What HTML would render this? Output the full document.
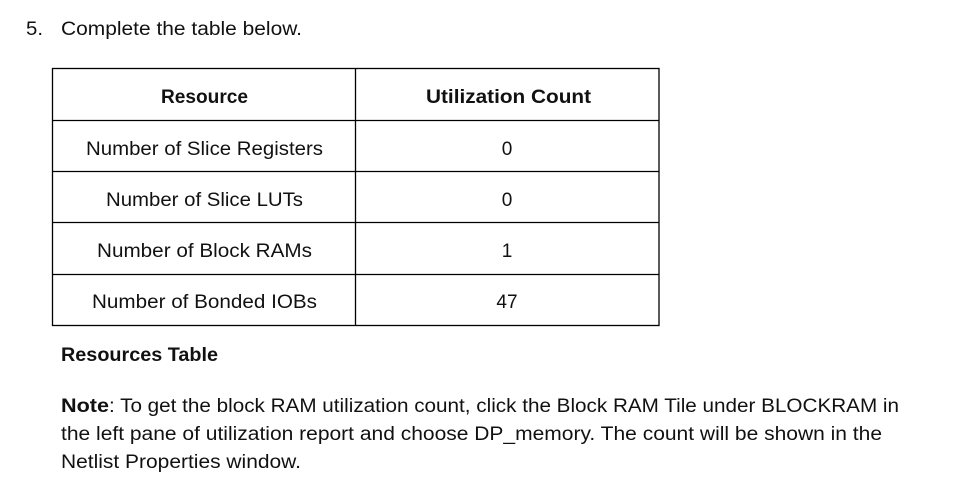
<!DOCTYPE html>
<html><head><meta charset="utf-8"><style>
html,body{margin:0;padding:0;background:#fff;width:969px;height:489px;overflow:hidden}
svg{display:block}
text{font-family:"Liberation Sans",sans-serif;fill:#111}
</style></head><body>
<svg width="969" height="489" viewBox="0 0 969 489" xmlns="http://www.w3.org/2000/svg">
<g font-size="19">
<text x="26" y="35" textLength="17" lengthAdjust="spacingAndGlyphs">5.</text>
<text x="61" y="35" textLength="241" lengthAdjust="spacingAndGlyphs">Complete the table below.</text>
</g>
<g stroke="#000" stroke-width="1.3" fill="none">
<rect x="52.5" y="68.5" width="606.5" height="257"/>
<line x1="355.5" y1="68" x2="355.5" y2="326"/>
<line x1="52" y1="120.5" x2="659" y2="120.5"/>
<line x1="52" y1="171.5" x2="659" y2="171.5"/>
<line x1="52" y1="222.5" x2="659" y2="222.5"/>
<line x1="52" y1="274.5" x2="659" y2="274.5"/>
</g>
<g font-size="19">
<text x="161" y="103" font-weight="bold" textLength="87" lengthAdjust="spacingAndGlyphs">Resource</text>
<text x="426" y="103" font-weight="bold" textLength="165" lengthAdjust="spacingAndGlyphs">Utilization Count</text>
<text x="86" y="155" textLength="237" lengthAdjust="spacingAndGlyphs">Number of Slice Registers</text>
<text x="106" y="206" textLength="197" lengthAdjust="spacingAndGlyphs">Number of Slice LUTs</text>
<text x="97" y="257" textLength="215" lengthAdjust="spacingAndGlyphs">Number of Block RAMs</text>
<text x="92" y="308" textLength="225" lengthAdjust="spacingAndGlyphs">Number of Bonded IOBs</text>
<text x="507" y="155" text-anchor="middle">0</text>
<text x="507" y="206" text-anchor="middle">0</text>
<text x="507" y="257" text-anchor="middle">1</text>
<text x="507" y="308" text-anchor="middle">47</text>
<text x="61" y="361" font-weight="bold" textLength="157" lengthAdjust="spacingAndGlyphs">Resources Table</text>
<text x="61" y="412" font-weight="bold" textLength="48" lengthAdjust="spacingAndGlyphs">Note</text>
<text x="109" y="412" textLength="790" lengthAdjust="spacingAndGlyphs">: To get the block RAM utilization count, click the Block RAM Tile under BLOCKRAM in</text>
<text x="61" y="440" textLength="821" lengthAdjust="spacingAndGlyphs">the left pane of utilization report and choose DP_memory. The count will be shown in the</text>
<text x="61" y="468" textLength="240" lengthAdjust="spacingAndGlyphs">Netlist Properties window.</text>
</g>
</svg>
</body></html>
